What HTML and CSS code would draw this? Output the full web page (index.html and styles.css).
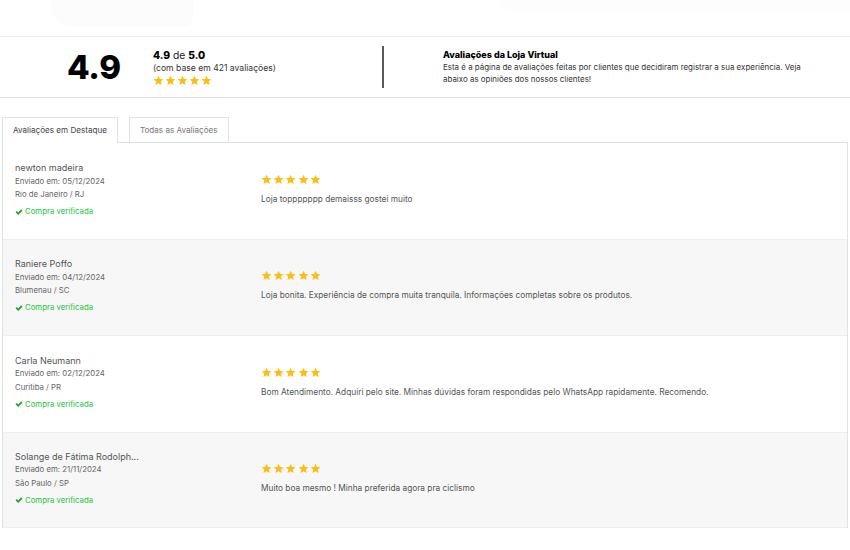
FILE: index.html
```html
<!DOCTYPE html>
<html lang="pt-BR">
<head>
<meta charset="utf-8">
<link rel="stylesheet" href="styles.css">
</head>
<body>
<svg width="0" height="0" class="defs">
  <defs>
    <symbol id="star" viewBox="0 0 24 24"><path d="M12 1.5l3.1 7 7.6.7-5.8 5 1.8 7.5L12 17.8l-6.7 3.9 1.8-7.5-5.8-5 7.6-.7z"/></symbol>
    <symbol id="check" viewBox="0 0 16 16"><path d="M1 8.4l2.5-2.5 2.9 2.9L12.4 2.6l2.6 2.6-8.6 8.6z"/></symbol>
  </defs>
</svg>
<header class="topbar">
  <div class="ghost ghost-left"></div>
  <div class="ghost ghost-right"></div>
</header>
<section class="summary">
  <div class="score">4.9</div>
  <div class="meta">
    <div class="meta-line"><b>4.9</b> de <b>5.0</b></div>
    <div class="meta-base">(com base em 421 avaliações)</div>
    <div class="stars stars-sm">
      <svg><use href="#star"/></svg><svg><use href="#star"/></svg><svg><use href="#star"/></svg><svg><use href="#star"/></svg><svg><use href="#star"/></svg>
    </div>
  </div>
  <div class="divider"></div>
  <div class="about">
    <div class="about-title">Avaliações da Loja Virtual</div>
    <p class="about-text">Esta é a página de avaliações feitas por clientes que decidiram registrar a sua experiência. Veja abaixo as opiniões dos nossos clientes!</p>
  </div>
</section>
<nav class="tabs">
  <div class="tab active">Avaliações em Destaque</div>
  <div class="tab">Todas as Avaliações</div>
</nav>
<main class="panel">
  <article class="review">
    <div class="who">
      <div class="name">newton madeira</div>
      <div class="line">Enviado em: 05/12/2024</div>
      <div class="line">Rio de Janeiro / RJ</div>
      <div class="verified"><svg><use href="#check"/></svg>Compra verificada</div>
    </div>
    <div class="body">
      <div class="stars"><svg><use href="#star"/></svg><svg><use href="#star"/></svg><svg><use href="#star"/></svg><svg><use href="#star"/></svg><svg><use href="#star"/></svg></div>
      <p class="text">Loja toppppppp demaisss gostei muito</p>
    </div>
  </article>
  <article class="review alt">
    <div class="who">
      <div class="name">Raniere Poffo</div>
      <div class="line">Enviado em: 04/12/2024</div>
      <div class="line">Blumenau / SC</div>
      <div class="verified"><svg><use href="#check"/></svg>Compra verificada</div>
    </div>
    <div class="body">
      <div class="stars"><svg><use href="#star"/></svg><svg><use href="#star"/></svg><svg><use href="#star"/></svg><svg><use href="#star"/></svg><svg><use href="#star"/></svg></div>
      <p class="text">Loja bonita. Experiência de compra muita tranquila. Informações completas sobre os produtos.</p>
    </div>
  </article>
  <article class="review">
    <div class="who">
      <div class="name">Carla Neumann</div>
      <div class="line">Enviado em: 02/12/2024</div>
      <div class="line">Curitiba / PR</div>
      <div class="verified"><svg><use href="#check"/></svg>Compra verificada</div>
    </div>
    <div class="body">
      <div class="stars"><svg><use href="#star"/></svg><svg><use href="#star"/></svg><svg><use href="#star"/></svg><svg><use href="#star"/></svg><svg><use href="#star"/></svg></div>
      <p class="text">Bom Atendimento. Adquiri pelo site. Minhas dúvidas foram respondidas pelo WhatsApp rapidamente. Recomendo.</p>
    </div>
  </article>
  <article class="review alt">
    <div class="who">
      <div class="name">Solange de Fátima Rodolph...</div>
      <div class="line">Enviado em: 21/11/2024</div>
      <div class="line">São Paulo / SP</div>
      <div class="verified"><svg><use href="#check"/></svg>Compra verificada</div>
    </div>
    <div class="body">
      <div class="stars"><svg><use href="#star"/></svg><svg><use href="#star"/></svg><svg><use href="#star"/></svg><svg><use href="#star"/></svg><svg><use href="#star"/></svg></div>
      <p class="text">Muito boa mesmo ! Minha preferida agora pra ciclismo</p>
    </div>
  </article>
</main>
</body>
</html>
```

FILE: styles.css
```css
* { box-sizing: border-box; }
html, body { margin: 0; padding: 0; background: #fff; }
body {
  font-family: "Inter", "DejaVu Sans", sans-serif;
  color: #555;
  width: 850px;
  height: 550px;
  overflow: hidden;
}
.defs { position: absolute; }

.topbar {
  height: 37px;
  border-bottom: 1px solid #efefef;
  display: flex;
  justify-content: space-between;
}
.ghost { background: #fcfcfc; }
.ghost-left { width: 143px; height: 27px; margin-left: 50px; border-radius: 0 0 10px 24px; }
.ghost-right { width: 350px; height: 11px; border-radius: 0 0 0 40px; background: #fdfdfd; }

.summary {
  height: 61px;
  display: flex;
  align-items: center;
  border-bottom: 1px solid #e3e3e3;
}
.score {
  width: 153px;
  padding-left: 67px;
  font-size: 33px;
  font-weight: 800;
  color: #000;
  letter-spacing: -0.3px;
}
.meta { width: 229px; color: #222; }
.meta-line { font-size: 10.3px; line-height: 13px; }
.meta-line b { font-weight: 800; color: #000; }
.meta-base { font-size: 8.6px; line-height: 12px; color: #333; }
.stars { display: flex; gap: 1px; color: #fdbd12; }
.stars svg { width: 11px; height: 11px; fill: currentColor; }
.stars-sm { margin-top: 1px; }

.divider { width: 2px; height: 42px; background: #5a5a5a; margin-right: 59px; }
.about { width: 380px; }
.about-title { font-size: 9px; font-weight: 800; color: #000; line-height: 12px; }
.about-text { margin: 1px 0 0; font-size: 7.95px; line-height: 11.5px; color: #333; }

.tabs {
  display: flex;
  gap: 11px;
  padding-left: 2px;
  margin-top: 19px;
}
.tab {
  height: 25px;
  padding: 0 10px;
  border: 1px solid #dde4e4;
  border-bottom: none;
  font-size: 8.1px;
  line-height: 25px;
  color: #777;
  background: #fff;
}
.tab.active { color: #444; height: 26px; margin-bottom: -1px; position: relative; }

.panel {
  margin: 0 2px;
  border: 1px solid #dde4e4;
  border-bottom: none;
}
.review {
  height: 96.3px;
  display: flex;
  padding-left: 12px;
}
.review.alt { background: #f7f7f7; box-shadow: inset 0 1px 0 #eeeeee, inset 0 -1px 0 #eeeeee; }
.who { width: 246px; padding-top: 18px; font-size: 7.8px; }
.name { font-size: 9px; line-height: 13.5px; color: #555; }
.line { line-height: 13.5px; color: #666; }
.verified {
  margin-top: 3.5px;
  line-height: 13px;
  color: #1dc43a;
  display: flex;
  align-items: center;
  gap: 2px;
}
.verified svg { width: 8px; height: 8px; fill: #1ba82c; }
.body { padding-top: 31px; }
.body .stars { gap: 1px; }
.body .stars svg { width: 11.2px; height: 11.2px; }
.text { margin: 8px 0 0; font-size: 8.3px; line-height: 13px; color: #555; }
```
